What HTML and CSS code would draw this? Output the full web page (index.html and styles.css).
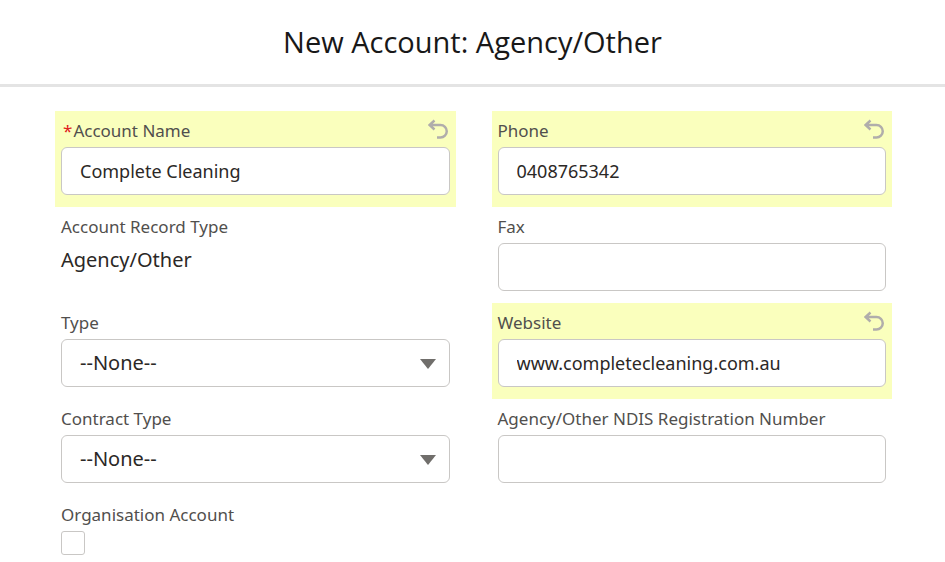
FILE: index.html
```html
<!DOCTYPE html>
<html lang="en">
<head>
<meta charset="utf-8">
<title>New Account: Agency/Other</title>
<link rel="stylesheet" href="styles.css">
</head>
<body>
<header class="header"><h1 class="title">New Account: Agency/Other</h1></header>
<form class="form">
  <div class="field changed">
    <div class="label-row"><label for="name"><span class="required">*</span>Account Name</label>
      <button class="undo" type="button" aria-label="Undo Account Name"><svg viewBox="0 0 40 40"><path d="M13 3 3 12l10 9M4 12H25a12 12 0 0 1 0 25H18"/></svg></button></div>
    <input class="control" id="name" type="text" value="Complete Cleaning">
  </div>
  <div class="field changed">
    <div class="label-row"><label for="phone">Phone</label>
      <button class="undo" type="button" aria-label="Undo Phone"><svg viewBox="0 0 40 40"><path d="M13 3 3 12l10 9M4 12H25a12 12 0 0 1 0 25H18"/></svg></button></div>
    <input class="control" id="phone" type="text" value="0408765342">
  </div>
  <div class="field">
    <div class="label-row"><span>Account Record Type</span></div>
    <div class="static">Agency/Other</div>
  </div>
  <div class="field">
    <div class="label-row"><label for="fax">Fax</label></div>
    <input class="control" id="fax" type="text">
  </div>
  <div class="field">
    <div class="label-row"><label for="type">Type</label></div>
    <div class="select-wrap"><select class="control" id="type"><option>--None--</option></select></div>
  </div>
  <div class="field changed">
    <div class="label-row"><label for="website">Website</label>
      <button class="undo" type="button" aria-label="Undo Website"><svg viewBox="0 0 40 40"><path d="M13 3 3 12l10 9M4 12H25a12 12 0 0 1 0 25H18"/></svg></button></div>
    <input class="control" id="website" type="text" value="www.completecleaning.com.au">
  </div>
  <div class="field">
    <div class="label-row"><label for="contract">Contract Type</label></div>
    <div class="select-wrap"><select class="control" id="contract"><option>--None--</option></select></div>
  </div>
  <div class="field">
    <div class="label-row"><label for="ndis">Agency/Other NDIS Registration Number</label></div>
    <input class="control" id="ndis" type="text">
  </div>
  <div class="field compact">
    <div class="label-row"><label for="org">Organisation Account</label></div>
    <input class="checkbox" id="org" type="checkbox">
  </div>
</form>
</body>
</html>
```

FILE: styles.css
```css
* { box-sizing: border-box; }
body { margin: 0; background: #fff; color: #2b2826; font-family: "Noto Sans", "Open Sans", sans-serif; }
.header { padding: 22px 24px; border-bottom: 3px solid #e4e4e4; text-align: center; }
.title { margin: 0; font-family: "Open Sans", "Noto Sans", sans-serif; font-size: 29px; line-height: 40px; font-weight: 400; color: #181818; }
.form { display: grid; grid-template-columns: 1fr 1fr; column-gap: 36px; padding: 24px 53px 0 55px; }
.field { min-height: 96px; padding: 6px; }
.compact { min-height: 0; padding-bottom: 0; }
.changed { background: #faffbd; }
.label-row { display: flex; justify-content: space-between; height: 30px; font-size: 17px; line-height: 28px; color: #514f4d; }
.required { margin: 0 1px 0 2px; color: #e02020; }
.undo { width: 20px; height: 20px; padding: 0; margin: 2px; border: 0; background: none; }
.undo svg { display: block; width: 20px; height: 20px; fill: none; stroke: #b0adab; stroke-width: 5; }
.control { display: block; width: 100%; height: 48px; padding: 0 18px; border: 1px solid #c9c7c5; border-radius: 6px; background: #fff; color: #2b2826; font: 18px/46px "Noto Sans", "Open Sans", sans-serif; }
select.control { appearance: none; font-size: 20px; }
.select-wrap { display: grid; align-items: center; }
.select-wrap > .control, .select-wrap::after { grid-area: 1 / 1; }
.select-wrap::after { content: ""; justify-self: end; margin: 2px 14px 0 0; border: 8px solid transparent; border-top: 10px solid #706e6b; border-bottom: 0; pointer-events: none; }
.static { font-size: 20px; line-height: 34px; }
.checkbox { display: block; appearance: none; width: 24px; height: 24px; margin: 0; border: 1px solid #c9c7c5; border-radius: 3px; background: #fff; }
```
